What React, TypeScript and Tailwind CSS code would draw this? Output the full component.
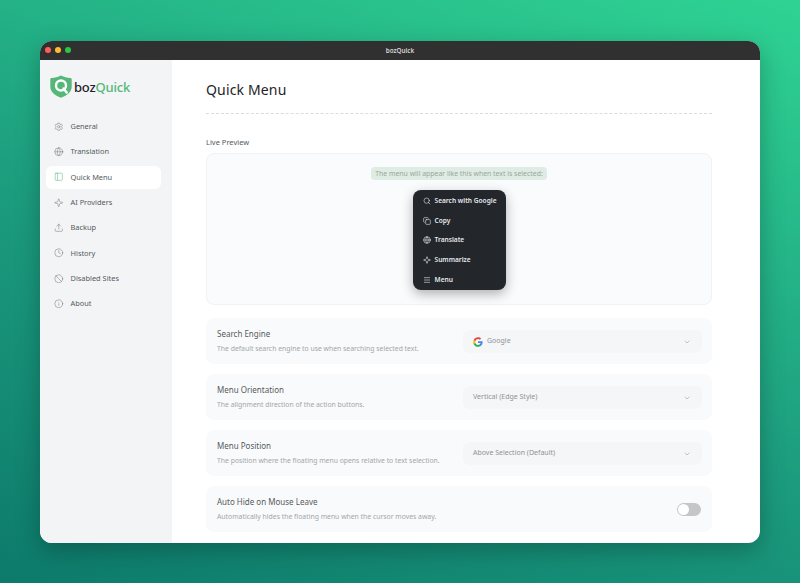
import { Ban, ChevronDown, Clock, Copy, Globe, Info, Menu, PanelLeft, Search, Settings, Sparkle, Upload } from "lucide-react";

const navItems = [
  { label: "General", icon: Settings },
  { label: "Translation", icon: Globe },
  { label: "Quick Menu", icon: PanelLeft, active: true },
  { label: "AI Providers", icon: Sparkle },
  { label: "Backup", icon: Upload },
  { label: "History", icon: Clock },
  { label: "Disabled Sites", icon: Ban },
  { label: "About", icon: Info },
];

const previewItems = [
  { label: "Search with Google", icon: Search },
  { label: "Copy", icon: Copy },
  { label: "Translate", icon: Globe },
  { label: "Summarize", icon: Sparkle },
  { label: "Menu", icon: Menu },
];

function GoogleIcon() {
  return (
    <svg width="10" height="10" viewBox="0 0 24 24">
      <path fill="#4285F4" d="M23 12.3c0-.8-.1-1.600-.2-2.300H12v4.400h6.200c-.3 1.400-1.100 2.600-2.300 3.400v2.800h3.700c2.100-2 3.400-4.900 3.400-8.300z" />
      <path fill="#34A853" d="M12 23.500c3.100 0 5.700-1 7.600-2.800l-3.700-2.800c-1 .7-2.300 1.100-3.900 1.100-3 0-5.500-2-6.400-4.700H1.800v2.900c1.900 3.800 5.800 6.300 10.200 6.300z" />
      <path fill="#FBBC05" d="M5.600 14.300c-.5-1.400-.5-3 0-4.500V6.900H1.800c-1.600 3.200-1.600 7 0 10.300l3.800-2.900z" />
      <path fill="#EA4335" d="M12 5c1.700 0 3.200.6 4.400 1.700l3.300-3.300C17.700 1.600 15.100.5 12 .5 7.600.5 3.700 3 1.800 6.900l3.800 2.900C6.500 7 9 5 12 5z" />
    </svg>
  );
}

function Logo() {
  return (
    <svg width="22" height="23" viewBox="0 0 22 23">
      <path fill="#55b878" d="M11 .5c3 1.600 6 2.300 9.300 2.500.9 0 1.400.6 1.400 1.400v7.400c0 5-4.300 8.700-10.700 11C4.600 20.500.3 16.800.3 11.800V4.400C.3 3.600.8 3 1.700 3 5 2.800 8 2.100 11 .5z" />
      <circle cx="11" cy="10.500" r="5" fill="none" stroke="#fff" strokeWidth="2.400" />
      <path d="M13.500 13.500l3.200 4" stroke="#fff" strokeWidth="2.400" strokeLinecap="round" />
    </svg>
  );
}

function Row({ title, desc, children }: { title: string; desc: string; children: React.ReactNode }) {
  return (
    <div className="flex h-[46px] items-center justify-between rounded-lg bg-[#f9fafb] pl-[11px] pr-[10px]">
      <div>
        <div className="text-[8px] leading-[12px] text-[#555a60]">{title}</div>
        <div className="mt-[4px] text-[6.850px] leading-[10px] text-[#a3a6aa]">{desc}</div>
      </div>
      {children}
    </div>
  );
}

function SelectBox({ value, google }: { value: string; google?: boolean }) {
  return (
    <div className="mt-[1px] flex h-[23px] w-[239px] items-center justify-between rounded-md bg-[#f5f6f8] pl-[10px] pr-[11px]">
      <div className="flex items-center gap-[4px] text-[7px] text-[#8f9296]">
        {google && <GoogleIcon />}
        {value}
      </div>
      <ChevronDown size={8} className="text-[#a3a8b1]" />
    </div>
  );
}

export default function App() {
  return (
    <div className="h-[583px] overflow-hidden bg-[linear-gradient(20deg,#0d7a6b_0%,#1c9c7e_45%,#2fd393_100%)] px-10 pt-[41px] font-['Noto_Sans','Open_Sans',sans-serif]">
      <div className="flex h-[502px] flex-col overflow-hidden rounded-xl bg-white shadow-[0_8px_24px_rgba(0,0,0,0.25)]">
        <div className="relative flex h-[19px] shrink-0 items-center justify-center bg-[#303030]">
          <div className="absolute left-[5px] top-[6px] flex gap-[4px]">
            <span className="size-[6px] rounded-full bg-[#ff5f57]" />
            <span className="size-[6px] rounded-full bg-[#febc2e]" />
            <span className="size-[6px] rounded-full bg-[#28c840]" />
          </div>
          <span className="text-[6.300px] font-semibold text-[#d4d4d4]">bozQuick</span>
        </div>
        <div className="flex min-h-0 flex-1">
          <aside className="w-[132px] shrink-0 bg-[#f3f4f6] pl-[6px] pr-[11px] pt-[15px]">
            <div className="flex items-center gap-[2px] pl-[4px]">
              <Logo />
              <span className="text-[13px] font-medium leading-[22px] tracking-[-0.2px] text-[#1f2328]">
                boz<span className="text-[#55b878]">Quick</span>
              </span>
            </div>
            <nav className="mt-[17px] flex flex-col gap-[2px]">
              {navItems.map((item) => (
                <div
                  key={item.label}
                  className={`flex h-[23.300px] items-center gap-[7px] rounded-md pl-[8px] text-[7.400px] text-[#555a60] ${item.active ? "bg-white" : ""}`}
                >
                  <item.icon size={9.500} strokeWidth={1.300} className={item.active ? "text-[#55b878]" : "text-[#73777d]"} />
                  {item.label}
                </div>
              ))}
            </nav>
          </aside>
          <main className="min-w-0 flex-1 pl-[34px] pr-[48px] pt-[19px]">
            <h1 className="text-[14px] leading-[22px] tracking-[0.15px] text-[#1f2328]">Quick Menu</h1>
            <div className="mt-[12px] border-t border-dashed border-[#d8dbdf]" />
            <div className="mt-[22px] text-[7.500px] leading-[12px] text-[#555a60]">Live Preview</div>
            <div className="mt-[5px] flex h-[152px] flex-col items-center rounded-lg border border-[#f0f2f4] bg-[#fafbfc] pt-[13px]">
              <span className="rounded-sm bg-[#dfece4] px-[4px] text-[6.900px] leading-[13px] text-[#9aa5a0]">
                The menu will appear like this when text is selected:
              </span>
              <div className="mt-[10px] w-[93px] rounded-lg bg-[#23272b] py-[1px] shadow-[0_4px_12px_rgba(0,0,0,0.3)]">
                {previewItems.map((item) => (
                  <div key={item.label} className="flex h-[19.700px] items-center gap-[4px] pl-[10px] text-[6.600px] font-semibold text-[#e5e7eb]">
                    <item.icon size={8} strokeWidth={1.800} />
                    {item.label}
                  </div>
                ))}
              </div>
            </div>
            <div className="mt-[13px] flex flex-col gap-[10px]">
              <Row title="Search Engine" desc="The default search engine to use when searching selected text.">
                <SelectBox value="Google" google />
              </Row>
              <Row title="Menu Orientation" desc="The alignment direction of the action buttons.">
                <SelectBox value="Vertical (Edge Style)" />
              </Row>
              <Row title="Menu Position" desc="The position where the floating menu opens relative to text selection.">
                <SelectBox value="Above Selection (Default)" />
              </Row>
              <Row title="Auto Hide on Mouse Leave" desc="Automatically hides the floating menu when the cursor moves away.">
                <div className="mr-[1px] flex h-[13px] w-[24px] items-center rounded-full bg-[#c4c6c9] pl-[1px]">
                  <span className="size-[11px] rounded-full bg-white" />
                </div>
              </Row>
            </div>
          </main>
        </div>
      </div>
    </div>
  );
}
